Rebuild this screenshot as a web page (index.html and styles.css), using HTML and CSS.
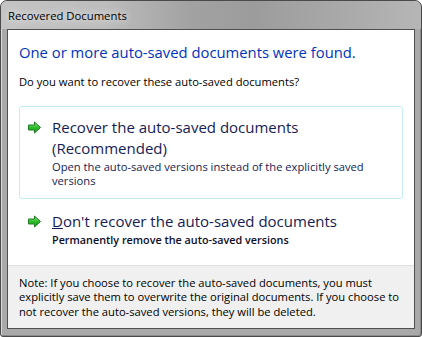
FILE: index.html
```html
<!DOCTYPE html>
<html>
<head>
<meta charset="utf-8">
<link rel="stylesheet" href="styles.css">
</head>
<body>
<div class="window">
  <div class="titlebar"><span class="title">Recovered Documents</span></div>
  <div class="client">
    <div class="content">
      <div class="main">One or more auto-saved documents were found.</div>
      <div class="sub">Do you want to recover these auto-saved documents?</div>
      <div class="cmd focused">
        <svg class="arrow" width="15" height="13" viewBox="0 0 15 13">
          <defs>
            <linearGradient id="g1" x1="0" y1="0" x2="0" y2="1">
              <stop offset="0" stop-color="#8ae486"/>
              <stop offset="0.5" stop-color="#2fbd2c"/>
              <stop offset="1" stop-color="#14931a"/>
            </linearGradient>
          </defs>
          <path d="M1.5 4 H7.5 V1 L13.5 6.5 L7.5 12 V9 H1.5 Z" fill="url(#g1)" stroke="#1d7e22" stroke-width="1" stroke-linejoin="round"/>
        </svg>
        <div class="cmd-text">
          <div class="cmd-title">Recover the auto-saved documents<br>(Recommended)</div>
          <div class="cmd-desc">Open the auto-saved versions instead of the explicitly saved versions</div>
        </div>
      </div>
      <div class="cmd">
        <svg class="arrow" width="15" height="13" viewBox="0 0 15 13">
          <path d="M1.5 4 H7.5 V1 L13.5 6.5 L7.5 12 V9 H1.5 Z" fill="url(#g1)" stroke="#1d7e22" stroke-width="1" stroke-linejoin="round"/>
        </svg>
        <div class="cmd-text">
          <div class="cmd-title"><u>D</u>on't recover the auto-saved documents</div>
          <div class="cmd-desc dark">Permanently remove the auto-saved versions</div>
        </div>
      </div>
    </div>
    <div class="footer">Note: If you choose to recover the auto-saved documents, you must explicitly save them to overwrite the original documents. If you choose to not recover the auto-saved versions, they will be deleted.</div>
  </div>
</div>
</body>
</html>
```

FILE: styles.css
```css
html, body {
  margin: 0;
  padding: 0;
  background: #ffffff;
}
body {
  font-family: "Open Sans", "Noto Sans", sans-serif;
}
.window {
  width: 422px;
  height: 337px;
  box-sizing: border-box;
  border: 1px solid #4a4a4a;
  border-radius: 7px 7px 3px 3px;
  background: #a9a9a9;
  box-shadow: inset 1px 1px 0 #d8d8d8, inset -1px -1px 0 #8a8a8a;
  display: flex;
  flex-direction: column;
  padding: 0 6px 7px 6px;
  overflow: hidden;
}
.titlebar {
  height: 28px;
  flex: none;
  display: flex;
  align-items: center;
  margin: 0 -6px;
  padding: 0 7px;
  background: linear-gradient(90deg, #c4c4c4 0%, #bcbcbc 25%, #a2a2a2 45%, #9c9c9c 60%, #a8a8a8 80%, #b6b6b6 100%);
  border-radius: 6px 6px 0 0;
}
.title {
  font-size: 11.3px;
  color: #000;
  padding: 1px 3px 0 0;
  text-shadow: 0 0 6px #e8e8e8, 0 0 10px #e0e0e0;
  margin-top: -1px;
}
.client {
  flex: 1;
  border: 1px solid #4f4f4f;
  background: #fff;
  display: flex;
  flex-direction: column;
}
.content {
  flex: 1;
  padding: 12px 11px 0 11px;
}
.main {
  font-size: 14.8px;
  color: #0033bc;
  line-height: 20px;
}
.sub {
  font-size: 11.2px;
  color: #000;
  margin-top: 12px;
  line-height: 15px;
}
.cmd {
  display: flex;
  align-items: flex-start;
  border: 1px solid transparent;
  border-radius: 3px;
  padding: 10px 8px 10px 7px;
  margin-top: 1px;
}
.cmd.focused {
  border-color: #c3edfb;
  margin-top: 17px;
}
.arrow {
  flex: none;
  margin-top: 4px;
  margin-right: 10px;
}
.cmd-title {
  font-size: 15px;
  line-height: 21px;
  color: #151c55;
}
.cmd-desc {
  font-size: 11.2px;
  line-height: 14px;
  color: #151c55;
  margin-top: 1px;
}
.cmd-desc.dark {
  color: #0d0d2a;
  font-weight: 600;
  font-size: 10.8px;
}
.footer {
  flex: none;
  border-top: 1px solid #dfdfdf;
  background: #f0f0f0;
  padding: 10px 10px 9px 11px;
  font-size: 11.2px;
  line-height: 14.5px;
  color: #000;
}
```
